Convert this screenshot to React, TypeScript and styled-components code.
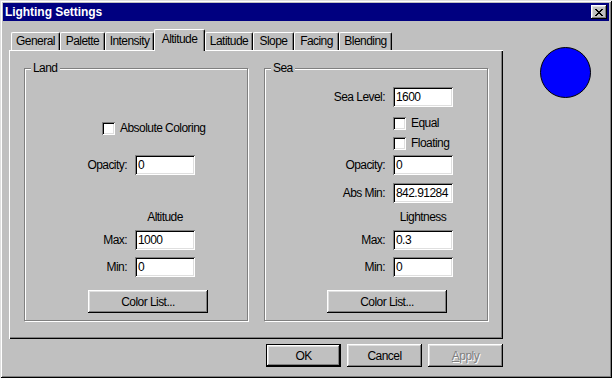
import React from 'react';
import styled, { createGlobalStyle, css } from 'styled-components';

const GlobalStyle = createGlobalStyle`
  html, body { margin: 0; padding: 0; background: #c0c0c0; }
  body {
    font-family: "Liberation Sans", Arial, sans-serif;
    font-size: 12px;
    letter-spacing: -0.55px;
    color: #000;
  }
  * { box-sizing: border-box; }
`;

const Window = styled.div`
  width: 612px;
  height: 378px;
  background: #c0c0c0;
  padding: 3px;
  display: flex;
  flex-direction: column;
  box-shadow: inset 1px 1px #dfdfdf, inset -1px -1px #000, inset 2px 2px #fff, inset -2px -2px #808080;
`;

const TitleBar = styled.div`
  height: 18px;
  background: #000080;
  color: #fff;
  display: flex;
  align-items: center;
  justify-content: space-between;
  padding: 0 2px 0 2px;
`;

const TitleText = styled.span`
  font-weight: bold;
  font-size: 12px;
  letter-spacing: -0.05px;
  line-height: 14px;
`;

const CloseButton = styled.div`
  width: 16px;
  height: 14px;
  background: #c0c0c0;
  display: flex;
  align-items: center;
  justify-content: center;
  box-shadow: inset -1px -1px #000, inset 1px 1px #fff, inset -2px -2px #808080, inset 2px 2px #dfdfdf;
`;

const Body = styled.div`
  flex: 1;
  display: flex;
`;

const LeftCol = styled.div`
  margin: 8px 0 0 6px;
  width: 494px;
  display: flex;
  flex-direction: column;
`;

const TabStrip = styled.div`
  height: 21px;
  display: flex;
  align-items: flex-end;
  padding-left: 2px;
  position: relative;
  z-index: 1;
`;

const Tab = styled.div<{ $w: number; $active?: boolean }>`
  width: ${(p) => p.$w}px;
  height: 18px;
  padding-top: 1px;
  text-align: center;
  line-height: 14px;
  background: #c0c0c0;
  border-left: 1px solid #fff;
  border-top: 1px solid #fff;
  border-right: 1px solid #000;
  border-top-left-radius: 2px;
  border-top-right-radius: 2px;
  box-shadow: inset -1px 0 #808080;
  ${(p) =>
    p.$active &&
    css`
      height: 22px;
      margin-bottom: -1px;
      padding-top: 2px;
    `}
`;

const Panel = styled.div`
  width: 494px;
  height: 289px;
  background: #c0c0c0;
  box-shadow: inset 1px 1px #fff, inset -1px -1px #000, inset -2px -2px #808080;
  display: flex;
  gap: 16px;
  padding: 18px 14px 0 15px;
`;

const GroupBox = styled.div`
  position: relative;
  width: 224px;
  height: 253px;
  border: 1px solid #808080;
  box-shadow: inset 1px 1px #fff, 1px 1px #fff;
  display: flex;
  flex-direction: column;
`;

const GroupTitle = styled.span`
  position: absolute;
  top: -8px;
  left: 6px;
  padding: 0 2px;
  line-height: 14px;
  background: #c0c0c0;
`;

const Row = styled.div<{ $mt: number; $pl?: number }>`
  display: flex;
  align-items: center;
  height: 20px;
  margin-top: ${(p) => p.$mt}px;
  padding-left: ${(p) => p.$pl ?? 0}px;
`;

const Label = styled.span<{ $w: number }>`
  width: ${(p) => p.$w}px;
  text-align: right;
  margin-right: 8px;
  line-height: 14px;
`;

const TextBox = styled.input`
  width: 60px;
  height: 20px;
  border: none;
  outline: none;
  background: #fff;
  font: inherit;
  letter-spacing: inherit;
  color: #000;
  padding: 0 0 1px 3px;
  box-shadow: inset 1px 1px #808080, inset -1px -1px #fff, inset 2px 2px #000, inset -2px -2px #dfdfdf;
`;

const CheckBox = styled.span`
  width: 13px;
  height: 13px;
  background: #fff;
  box-shadow: inset 1px 1px #808080, inset -1px -1px #fff, inset 2px 2px #000, inset -2px -2px #dfdfdf;
  margin-right: 5px;
  flex: none;
`;

const Heading = styled.div<{ $mt: number; $ml: number }>`
  width: 60px;
  margin: ${(p) => p.$mt}px 0 0 ${(p) => p.$ml}px;
  text-align: center;
  line-height: 13px;
`;

const Button = styled.button<{ $w?: number; $default?: boolean; $disabled?: boolean }>`
  width: ${(p) => p.$w ?? 75}px;
  height: 23px;
  padding: 0;
  border: none;
  background: #c0c0c0;
  font: inherit;
  letter-spacing: inherit;
  color: #000;
  box-shadow: inset -1px -1px #000, inset 1px 1px #fff, inset -2px -2px #808080, inset 2px 2px #dfdfdf;
  ${(p) =>
    p.$default &&
    css`
      border: 1px solid #000;
    `}
  ${(p) =>
    p.$disabled &&
    css`
      color: #808080;
      text-shadow: 1px 1px #fff;
    `}
`;

const GroupButton = styled(Button)<{ $ml: number; $mt: number }>`
  margin: ${(p) => p.$mt}px 0 0 ${(p) => p.$ml}px;
`;

const ButtonRow = styled.div`
  display: flex;
  justify-content: flex-end;
  gap: 6px;
  margin-top: 5px;
`;

const RightCol = styled.div`
  margin: 26px 0 0 37px;
`;

const Circle = styled.div`
  width: 51px;
  height: 51px;
  border-radius: 50%;
  background: #0000ff;
  border: 1px solid #000;
`;

const CloseGlyph = () => (
  <svg width="8" height="7" viewBox="0 0 8 7" shapeRendering="crispEdges">
    <path
      fill="#000"
      d="M0 0h2v1H0zM6 0h2v1H6zM1 1h2v1H1zM5 1h2v1H5zM2 2h4v1H2zM3 3h2v1H3zM2 4h4v1H2zM1 5h2v1H1zM5 5h2v1H5zM0 6h2v1H0zM6 6h2v1H6z"
    />
  </svg>
);

const tabs: { name: string; w: number }[] = [
  { name: 'General', w: 49 },
  { name: 'Palette', w: 45 },
  { name: 'Intensity', w: 49 },
  { name: 'Altitude', w: 51 },
  { name: 'Latitude', w: 48 },
  { name: 'Slope', w: 41 },
  { name: 'Facing', w: 45 },
  { name: 'Blending', w: 53 },
];

export default function App() {
  return (
    <>
      <GlobalStyle />
      <Window>
        <TitleBar>
          <TitleText>Lighting Settings</TitleText>
          <CloseButton>
            <CloseGlyph />
          </CloseButton>
        </TitleBar>
        <Body>
          <LeftCol>
            <TabStrip>
              {tabs.map((t) => (
                <Tab key={t.name} $w={t.w} $active={t.name === 'Altitude'}>
                  {t.name}
                </Tab>
              ))}
            </TabStrip>
            <Panel>
              <GroupBox>
                <GroupTitle>Land</GroupTitle>
                <Row $mt={49} $pl={77}>
                  <CheckBox />
                  <span>Absolute Coloring</span>
                </Row>
                <Row $mt={17}>
                  <Label $w={102}>Opacity:</Label>
                  <TextBox readOnly value="0" />
                </Row>
                <Heading $mt={36} $ml={110}>Altitude</Heading>
                <Row $mt={6}>
                  <Label $w={102}>Max:</Label>
                  <TextBox readOnly value="1000" />
                </Row>
                <Row $mt={7}>
                  <Label $w={102}>Min:</Label>
                  <TextBox readOnly value="0" />
                </Row>
                <GroupButton $w={120} $mt={13} $ml={63}>
                  Color List...
                </GroupButton>
              </GroupBox>
              <GroupBox>
                <GroupTitle>Sea</GroupTitle>
                <Row $mt={18}>
                  <Label $w={120}>Sea Level:</Label>
                  <TextBox readOnly value="1600" />
                </Row>
                <Row $mt={6} $pl={128}>
                  <CheckBox />
                  <span>Equal</span>
                </Row>
                <Row $mt={0} $pl={128}>
                  <CheckBox />
                  <span>Floating</span>
                </Row>
                <Row $mt={2}>
                  <Label $w={120}>Opacity:</Label>
                  <TextBox readOnly value="0" />
                </Row>
                <Row $mt={8}>
                  <Label $w={120}>Abs Min:</Label>
                  <TextBox readOnly value="842.91284" />
                </Row>
                <Heading $mt={8} $ml={128}>Lightness</Heading>
                <Row $mt={6}>
                  <Label $w={120}>Max:</Label>
                  <TextBox readOnly value="0.3" />
                </Row>
                <Row $mt={7}>
                  <Label $w={120}>Min:</Label>
                  <TextBox readOnly value="0" />
                </Row>
                <GroupButton $w={120} $mt={13} $ml={62}>
                  Color List...
                </GroupButton>
              </GroupBox>
            </Panel>
            <ButtonRow>
              <Button $default>OK</Button>
              <Button>Cancel</Button>
              <Button $disabled>
                <u>A</u>pply
              </Button>
            </ButtonRow>
          </LeftCol>
          <RightCol>
            <Circle />
          </RightCol>
        </Body>
      </Window>
    </>
  );
}
